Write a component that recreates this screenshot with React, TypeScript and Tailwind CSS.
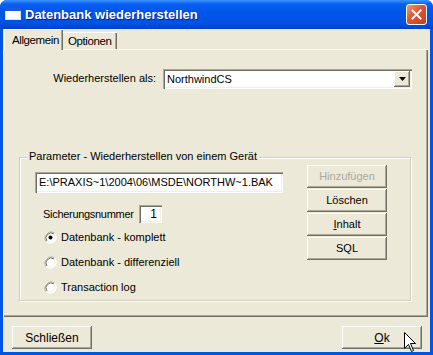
import React from "react";

function Btn({ children, disabled, className = "" }: { children: React.ReactNode; disabled?: boolean; className?: string }) {
  return (
    <div
      className={
        "w-[80px] h-[23px] flex items-center justify-center bg-[#ECE9D8] shadow-[inset_-1px_-1px_0_#716F64,inset_1px_1px_0_#FFFFFF,inset_-2px_-2px_0_#ACA899] " +
        (disabled ? "text-[#ACA899] " : "text-black ") +
        className
      }
    >
      {children}
    </div>
  );
}

function Radio({ checked, label }: { checked?: boolean; label: string }) {
  return (
    <div className="flex items-center h-[13px]">
      <svg width="13" height="13" viewBox="0 0 13 13">
        <circle cx="6.5" cy="6.5" r="6" fill="#FFFFFF" />
        <path d="M2.3 10.7 A6 6 0 0 1 10.7 2.3" fill="none" stroke="#ACA899" strokeWidth="1" />
        <path d="M3 10 A5 5 0 0 1 10 3" fill="none" stroke="#716F64" strokeWidth="1" />
        <path d="M10.7 2.3 A6 6 0 0 1 2.3 10.7" fill="none" stroke="#FFFFFF" strokeWidth="1" />
        <path d="M10 3 A5 5 0 0 1 3 10" fill="none" stroke="#F1EFE2" strokeWidth="1" />
        {checked && <circle cx="6.5" cy="6.5" r="2" fill="#000000" />}
      </svg>
      <span className="ml-[4px]">{label}</span>
    </div>
  );
}

const sunken =
  "bg-white shadow-[inset_1px_1px_0_#ACA899,inset_2px_2px_0_#716F64,inset_-1px_-1px_0_#FFFFFF,inset_-2px_-2px_0_#F1EFE2]";

export default function App() {
  return (
    <div className="w-[433px] h-[355px] flex flex-col bg-[#0055E5] rounded-t-[7px] overflow-hidden relative font-['Liberation_Sans',Arial,sans-serif] text-[11px] text-black leading-none">
      {/* title bar */}
      <div className="h-[29px] shrink-0 flex items-center pl-[5px] pr-[6px] bg-[linear-gradient(to_bottom,#3D95FF_0%,#0A5FF3_14%,#0055EA_40%,#0052E3_80%,#0041CC_100%)]">
        <svg width="16" height="12" viewBox="0 0 16 12" className="mt-[-2px]">
          <rect x="0.5" y="0.5" width="15" height="11" fill="#FFFFFF" stroke="#D8E4F8" />
          <rect x="0" y="0" width="16" height="3" fill="#1C5BD8" />
        </svg>
        <span className="ml-[4px] text-white font-bold text-[13px] [text-shadow:1px_1px_0_#0A1E8C]">
          Datenbank wiederherstellen
        </span>
        <div className="ml-auto w-[21px] h-[21px] rounded-[3px] border border-white flex items-center justify-center bg-[linear-gradient(135deg,#F29A7E_0%,#E0532F_45%,#C8401E_100%)]">
          <svg width="11" height="11" viewBox="0 0 11 11">
            <path d="M1.5 1.5 L9.5 9.5 M9.5 1.5 L1.5 9.5" stroke="#FFFFFF" strokeWidth="2" strokeLinecap="square" />
          </svg>
        </div>
      </div>

      {/* body */}
      <div className="flex-1 mx-[3px] mb-[3px] bg-[#ECE9D8] flex flex-col">
        {/* tabs */}
        <div className="h-[20px] shrink-0 flex items-end pl-[1px] text-[11.5px] tracking-[-0.4px]">
          <div className="relative z-10 w-[59px] h-[21px] -mb-px flex items-start pt-[5px] pl-[7px] bg-[#ECE9D8] border-l border-t border-white shadow-[inset_-1px_0_0_#716F64,inset_-2px_0_0_#ACA899]">
            Allgemein
          </div>
          <div className="w-[54px] h-[17px] flex items-start pt-[3px] pl-[5px] bg-[#ECE9D8] border-t border-white shadow-[inset_-1px_0_0_#716F64,inset_-2px_0_0_#ACA899]">
            Optionen
          </div>
        </div>

        {/* panel */}
        <div className="h-[268px] mr-[2px] border-l border-t border-white shadow-[inset_-1px_-1px_0_#716F64,inset_-2px_-2px_0_#ACA899] flex flex-col">
          <div className="flex items-start mt-[19px]">
            <div className="w-[152px] text-right pt-[4px]">Wiederherstellen als:</div>
            <div className={"ml-[7px] w-[249px] h-[20px] flex items-center " + sunken}>
              <span className="pl-[4px] pt-[1px]">NorthwindCS</span>
              <div className="ml-auto mr-[2px] w-[16px] h-[16px] flex items-center justify-center bg-[#ECE9D8] shadow-[inset_-1px_-1px_0_#716F64,inset_1px_1px_0_#FFFFFF,inset_-2px_-2px_0_#ACA899]">
                <svg width="7" height="4" viewBox="0 0 7 4">
                  <path d="M0 0 H7 L3.5 4 Z" fill="#000000" />
                </svg>
              </div>
            </div>
          </div>

          {/* group box */}
          <div className="relative ml-[15px] mt-[68px] w-[392px] h-[144px] border border-[#D0D0BF] shadow-[1px_1px_0_#FFFFFF,inset_1px_1px_0_#FFFFFF] flex items-start">
            <span className="absolute left-[7px] top-[-7px] px-[2px] bg-[#ECE9D8]">
              Parameter - Wiederherstellen von einem Gerät
            </span>
            <div className="flex flex-col pt-[14px] pl-[15px]">
              <div className={"w-[248px] h-[21px] flex items-center pl-[4px] " + sunken}>
                E:\PRAXIS~1\2004\06\MSDE\NORTHW~1.BAK
              </div>
              <div className="flex items-center mt-[12px] pl-[8px]">
                <div className="w-[93px] whitespace-nowrap tracking-[-0.3px]">Sicherungsnummer</div>
                <div className={"ml-[3px] w-[23px] h-[18px] flex items-center justify-end pr-[5px] text-[12px] " + sunken}>
                  1
                </div>
              </div>
              <div className="flex flex-col gap-[12px] mt-[8px] pl-[9px]">
                <Radio checked label="Datenbank - komplett" />
                <Radio label="Datenbank - differenziell" />
                <Radio label="Transaction log" />
              </div>
            </div>
            <div className="flex flex-col gap-[1px] pt-[7px] ml-[24px]">
              <Btn disabled>Hinzufügen</Btn>
              <Btn>Löschen</Btn>
              <Btn>
                <span>
                  <span className="underline">I</span>nhalt
                </span>
              </Btn>
              <Btn>SQL</Btn>
            </div>
          </div>
        </div>

        {/* bottom buttons */}
        <div className="flex items-start mt-[9px] pl-[9px] pr-[8px]">
          <Btn className="text-[12px]">Schließen</Btn>
          <Btn className="ml-auto text-[12px]">
            <span>
              <span className="underline">O</span>k
            </span>
          </Btn>
        </div>
      </div>

      {/* mouse cursor */}
      <svg className="absolute left-[404px] top-[332px]" width="13" height="21" viewBox="0 0 13 21">
        <path d="M0.5 0.5 L0.5 16.5 L4.5 12.5 L7.5 19.5 L9.5 18.5 L6.5 11.5 L11.5 11.5 Z" fill="#FFFFFF" stroke="#000000" strokeWidth="1" />
      </svg>
    </div>
  );
}
